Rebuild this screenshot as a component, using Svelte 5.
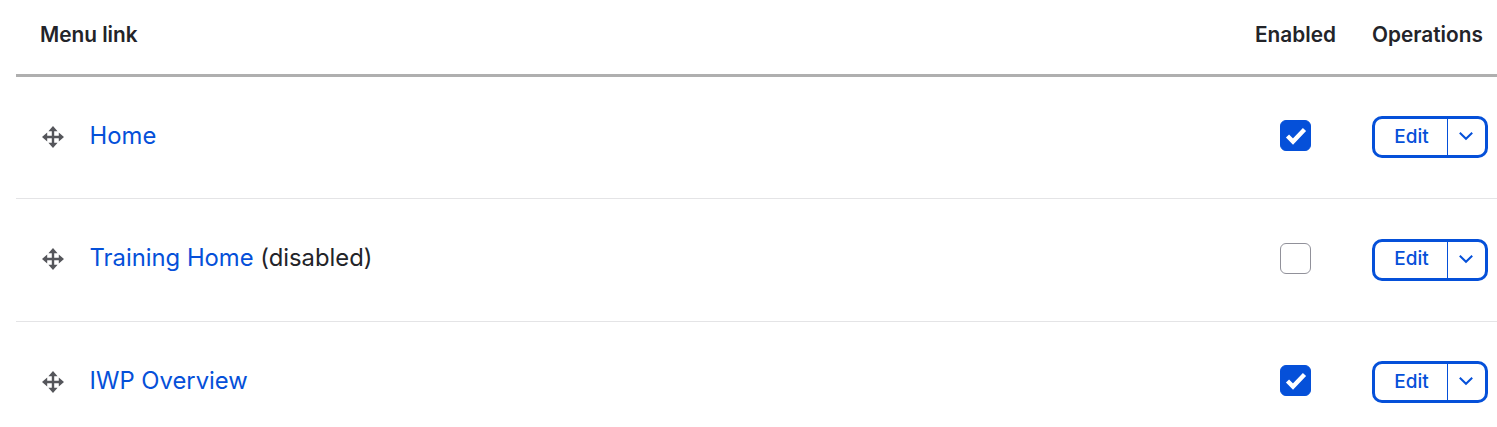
<script>
  const rows = [
    { title: 'Home', note: '', enabled: true },
    { title: 'Training Home', note: '(disabled)', enabled: false },
    { title: 'IWP Overview', note: '', enabled: true }
  ];
</script>

<div class="table">
  <div class="head row">
    <div class="c-link">Menu link</div>
    <div class="c-en">Enabled</div>
    <div class="c-op">Operations</div>
  </div>
  {#each rows as r}
    <div class="body row">
      <div class="c-link cell-link">
        <svg class="drag" viewBox="0 0 24 24" width="24" height="24" aria-hidden="true">
          <path d="M12 4v16M4 12h16" stroke="#55565b" stroke-width="2.4" fill="none" />
          <path d="M12 1l4.6 5.2H7.4zM12 23l-4.6-5.2h9.2zM1 12l5.2-4.6v9.2zM23 12l-5.2 4.6V7.400z" fill="#55565b" />
        </svg>
        <span class="title"><a href="#top">{r.title}</a>{#if r.note}&nbsp;<span class="note">{r.note}</span>{/if}</span>
      </div>
      <div class="c-en box-wrap">
        {#if r.enabled}
          <span class="box on">
            <svg viewBox="0 0 32 32" width="32" height="32" aria-hidden="true"><path d="M7.500 16l5.500 5.500L24.500 9.500" stroke="#fff" stroke-width="4.400" fill="none" /></svg>
          </span>
        {:else}
          <span class="box"></span>
        {/if}
      </div>
      <div class="c-op">
        <div class="drop">
          <span class="edit">Edit</span>
          <span class="toggle">
            <svg viewBox="0 0 16 10" width="16" height="10" aria-hidden="true"><path d="M1.800 1.800L8 7.800l6.200-6" stroke="#0550d9" stroke-width="2" fill="none" /></svg>
          </span>
        </div>
      </div>
    </div>
  {/each}
</div>

<style>
  :global(body) {
    margin: 0;
    background: #fff;
    overflow: hidden;
  }
  .table {
    margin-left: 16px;
    font-family: Inter, "Liberation Sans", sans-serif;
    color: #232429;
    width: 1481px;
  }
  .row {
    display: grid;
    grid-template-columns: 1fr 117px 125px;
    align-items: center;
  }
  .head {
    height: 69px;
    border-bottom: 3px solid #afafaf;
    font-size: 20.8px;
    font-weight: 600;
    padding-bottom: 5px;
  }
  .head .c-link {
    padding-left: 24px;
  }
  .head .c-en {
    white-space: nowrap;
  }
  .head .c-op {
    white-space: nowrap;
  }
  .body {
    height: 122.4px;
    box-sizing: border-box;
    border-bottom: 1px solid #e4e4e6;
    font-size: 23.8px;
  }
  .body:last-child {
    border-bottom: 0;
  }
  .cell-link {
    display: flex;
    align-items: center;
    padding-left: 25px;
  }
  .title {
    margin-bottom: 5px;
    margin-left: -0.4px;
  }
  .drag {
    flex: none;
    margin-right: 25px;
    margin-bottom: 2px;
  }
  a {
    color: #0550d9;
    text-decoration: none;
  }
  .box-wrap {
    padding-left: 25px;
    padding-bottom: 4px;
  }
  .box {
    display: block;
    box-sizing: border-box;
    width: 31px;
    height: 31px;
    border: 1px solid #91919a;
    border-radius: 6px;
    background: #fff;
  }
  .box.on {
    background: #0550d9;
    border-color: #0550d9;
    overflow: hidden;
  }
  .box.on svg {
    display: block;
    margin: -1px;
  }
  .c-op {
    padding-bottom: 1px;
  }
  .drop {
    box-sizing: border-box;
    display: flex;
    width: 116px;
    height: 42px;
    border: 3px solid #0550d9;
    border-radius: 10px;
    background: #fff;
    color: #0550d9;
    font-size: 19px;
    font-weight: 500;
  }
  .edit {
    flex: 1;
    display: flex;
    align-items: center;
    justify-content: center;
    padding-left: 1px;
    padding-bottom: 2px;
  }
  .toggle {
    width: 38px;
    flex: none;
    display: flex;
    align-items: center;
    justify-content: center;
    border-left: 1.5px solid #0550d9;
    box-sizing: border-box;
    padding-bottom: 2px;
    padding-right: 2px;
  }
</style>
